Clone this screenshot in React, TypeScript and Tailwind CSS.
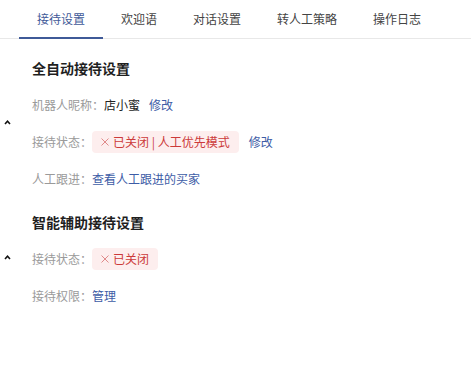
import React from 'react';

const tabs = ['接待设置', '欢迎语', '对话设置', '转人工策略', '操作日志'];

function Caret() {
    return (
        <svg width="7" height="5" viewBox="0 0 7 5" className="block">
            <path d="M1 4 L3.5 1.3 L6 4" fill="none" stroke="#111" strokeWidth="1.6" />
        </svg>
    );
}

function Tag({ children }: { children: React.ReactNode }) {
    return (
        <span className="inline-flex items-center h-[22px] px-[9px] rounded-[4px] bg-[#fdeeee] text-[#cc3a3a]">
            <svg width="8" height="8" viewBox="0 0 8 8" className="mr-[4px]">
                <path d="M0.5 0.5 L7.5 7.5 M7.5 0.5 L0.5 7.5" stroke="#e08a8a" strokeWidth="1" />
            </svg>
            {children}
        </span>
    );
}

function Row({ label, children }: { label: string; children: React.ReactNode }) {
    return (
        <div className="flex items-center h-[37px]">
            <span className="text-[#9a9a9a]">{label}</span>
            {children}
        </div>
    );
}

function Section({ title, children }: { title: string; children: React.ReactNode }) {
    return (
        <div className="flex">
            <div className="w-[32px] flex items-center pl-[4px] pb-[3px]">
                <Caret />
            </div>
            <div className="flex-1">
                <div className="h-[36px] flex items-center text-[14px] font-bold text-[#1f1f1f]">{title}</div>
                {children}
            </div>
        </div>
    );
}

export default function App() {
    return (
        <div
            className="w-[471px] h-[376px] bg-white text-[12px] text-[#333]"
            style={{ fontFamily: '"Noto Sans CJK SC", "Noto Sans", sans-serif' }}
        >
            {/* Tabs */}
            <div className="flex pl-[19px] border-b border-[#e8e8e8]">
                {tabs.map((t, i) => (
                    <div
                        key={t}
                        className={
                            i === 0
                                ? 'h-[39px] flex items-center px-[18px] -mb-px border-b-2 border-[#3f5a98] text-[#3f5a98]'
                                : 'h-[39px] flex items-center px-[18px] -mb-px border-b-2 border-transparent text-[#444]'
                        }
                    >
                        {t}
                    </div>
                ))}
            </div>

            <div className="pt-[11px] flex flex-col gap-[7px]">
                <Section title="全自动接待设置">
                    <Row label="机器人昵称：">
                        <span className="text-[#222]">店小蜜</span>
                        <span className="ml-[9px] text-[#3d5ca6]">修改</span>
                    </Row>
                    <Row label="接待状态：">
                        <Tag>已关闭 | 人工优先模式</Tag>
                        <span className="ml-[10px] text-[#3d5ca6]">修改</span>
                    </Row>
                    <Row label="人工跟进：">
                        <span className="text-[#3d5ca6]">查看人工跟进的买家</span>
                    </Row>
                </Section>

                <Section title="智能辅助接待设置">
                    <Row label="接待状态：">
                        <Tag>已关闭</Tag>
                    </Row>
                    <Row label="接待权限：">
                        <span className="text-[#3d5ca6]">管理</span>
                    </Row>
                </Section>
            </div>
        </div>
    );
}
